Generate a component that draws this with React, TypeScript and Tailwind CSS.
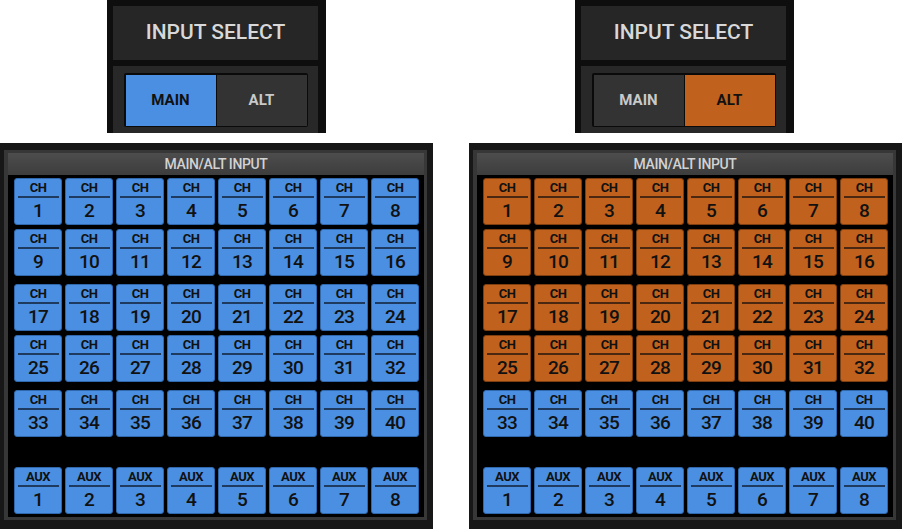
import React from "react";

type Tone = "blue" | "orange";

const toneClass: Record<Tone, { body: string; rule: string }> = {
  blue: { body: "bg-[#4a8fe2] border-[#2f68ad]", rule: "bg-[#1e3a5f]" },
  orange: { body: "bg-[#c0611d] border-[#7e3e10]", rule: "bg-[#4a2710]" },
};

const ChannelButton: React.FC<{ label: string; num: number; tone: Tone }> = ({ label, num, tone }) => {
  const t = toneClass[tone];
  return (
    <div className={`w-[48px] h-[47px] rounded-[3px] border flex flex-col items-center text-[#111] ${t.body}`}>
      <span className="mt-[3px] h-[12px] text-[13px] leading-[12px] font-bold tracking-[-0.5px]">{label}</span>
      <div className={`mt-[2px] w-[41px] h-[2px] ${t.rule}`} />
      <span className="mt-[4px] h-[18px] text-[19px] leading-[18px] font-medium tracking-[-0.8px]">{num}</span>
    </div>
  );
};

const rowGaps = ["mt-0", "mt-[4px]", "mt-[8px]", "mt-[4px]", "mt-[8px]", "mt-[30px]"];

const Panel: React.FC<{ orangeRows: number; className?: string }> = ({ orangeRows, className = "" }) => {
  const rows = [0, 1, 2, 3, 4, 5];
  return (
    <div className={`w-[433px] h-[386px] bg-[#171717] pt-[7px] pl-[4px] pr-[6px] pb-[9px] ${className}`}>
      <div className="h-full bg-[#373737] pt-[3px] pl-[4px] pr-[3px] pb-[3px] flex flex-col">
        <div className="h-[22px] bg-linear-to-b from-[#4d4d4d] to-[#3d3d3d] flex items-center justify-center text-[14px] font-medium text-[#d2d2d2] tracking-[-0.4px]">
          MAIN/ALT INPUT
        </div>
        <div className="flex-1 bg-black pl-[6px] pr-[5px] pt-[3px]">
          {rows.map((r) => {
            const isAux = r === 5;
            const tone: Tone = r < orangeRows ? "orange" : "blue";
            return (
              <div key={r} className={`flex gap-[3px] ${rowGaps[r]}`}>
                {Array.from({ length: 8 }, (_, i) => (
                  <ChannelButton
                    key={i}
                    label={isAux ? "AUX" : "CH"}
                    num={isAux ? i + 1 : r * 8 + i + 1}
                    tone={tone}
                  />
                ))}
              </div>
            );
          })}
        </div>
      </div>
    </div>
  );
};

const InputSelect: React.FC<{ active: "main" | "alt"; className?: string }> = ({ active, className = "" }) => {
  const seg = (on: boolean, onColor: string) =>
    `flex-1 flex items-center justify-center text-[15px] font-bold ${on ? `${onColor} text-[#111]` : "bg-[#333333] text-[#c9c9c9]"}`;
  return (
    <div className={`w-[219px] h-[133px] bg-[#0e0e0e] pt-[6px] pl-[6px] pr-[8px] flex flex-col ${className}`}>
      <div className="h-[54px] bg-[#262626] flex items-center justify-center text-[21px] font-medium text-[#d8d8d8]">
        INPUT SELECT
      </div>
      <div className="mt-[6px] flex-1 bg-[#282828] pt-[7px] pl-[11px] pr-[10px]">
        <div className="h-[54px] flex gap-[1px] bg-[#0a0a0a] p-[1.5px] rounded-[2px]">
          <div className={seg(active === "main", "bg-[#4a8fe2]")}>MAIN</div>
          <div className={seg(active === "alt", "bg-[#c0611d]")}>ALT</div>
        </div>
      </div>
    </div>
  );
};

export default function App() {
  return (
    <div className="w-[902px] h-[529px] bg-white overflow-hidden flex flex-col font-['Roboto','Liberation_Sans',sans-serif]">
      <div className="flex">
        <InputSelect active="main" className="ml-[107px]" />
        <InputSelect active="alt" className="ml-[249px]" />
      </div>
      <div className="flex mt-[10px]">
        <Panel orangeRows={0} />
        <Panel orangeRows={4} className="ml-[36px]" />
      </div>
    </div>
  );
}
